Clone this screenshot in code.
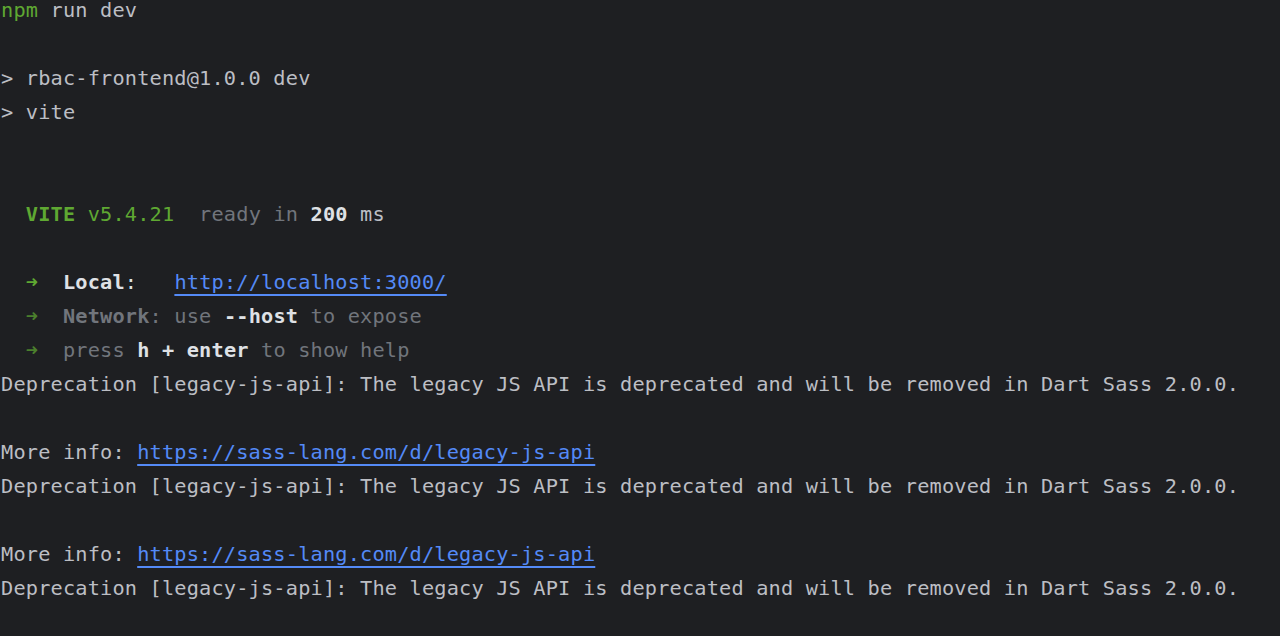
import React from "react";

const G = "text-[#5fa832]";
const GD = "text-[#4b7f2d]";
const DIM = "text-[#71757c]";
const B = "font-bold text-[#dfe1e5]";
const LINK = "text-[#548af7] underline decoration-[#548af7] underline-offset-[5px] decoration-[1.5px]";

function Line({ children }: { children?: React.ReactNode }) {
  return <div className="h-[34px] leading-[34px] whitespace-pre">{children ?? " "}</div>;
}

export default function App() {
  const dep = "Deprecation [legacy-js-api]: The legacy JS API is deprecated and will be removed in Dart Sass 2.0.0.";
  return (
    <div className="w-[1280px] h-[636px] overflow-hidden bg-[#1e1f22] text-[#bcbec4] font-['DejaVu_Sans_Mono','Liberation_Mono',monospace] text-[20.3px] tracking-[0.17px]">
      <div className="pl-[1px]">
        <div className="h-[27px] leading-[20px] whitespace-pre">
          <span className={G}>npm</span> run dev
        </div>
        <Line />
        <Line>{"> rbac-frontend@1.0.0 dev"}</Line>
        <Line>{"> vite"}</Line>
        <Line />
        <Line />
        <Line>
          {"  "}
          <span className={`${G} font-bold`}>VITE</span>
          <span className={G}> v5.4.21</span>
          <span className={DIM}>{"  ready in "}</span>
          <span className={B}>200</span>
          <span className="text-[#bcbec4]"> ms</span>
        </Line>
        <Line />
        <Line>
          {"  "}
          <span className={G}>➜</span>
          {"  "}
          <span className={B}>Local</span>
          <span className="text-[#dfe1e5]">:</span>
          {"   "}
          <span className={LINK}>http://localhost:3000/</span>
        </Line>
        <Line>
          {"  "}
          <span className={GD}>➜</span>
          {"  "}
          <span className={`${DIM} font-bold`}>Network</span>
          <span className={DIM}>: use </span>
          <span className={B}>--host</span>
          <span className={DIM}> to expose</span>
        </Line>
        <Line>
          {"  "}
          <span className={GD}>➜</span>
          {"  "}
          <span className={DIM}>press </span>
          <span className={B}>h + enter</span>
          <span className={DIM}> to show help</span>
        </Line>
        <Line>{dep}</Line>
        <Line />
        <Line>
          More info: <span className={LINK}>https://sass-lang.com/d/legacy-js-api</span>
        </Line>
        <Line>{dep}</Line>
        <Line />
        <Line>
          More info: <span className={LINK}>https://sass-lang.com/d/legacy-js-api</span>
        </Line>
        <Line>{dep}</Line>
      </div>
    </div>
  );
}
